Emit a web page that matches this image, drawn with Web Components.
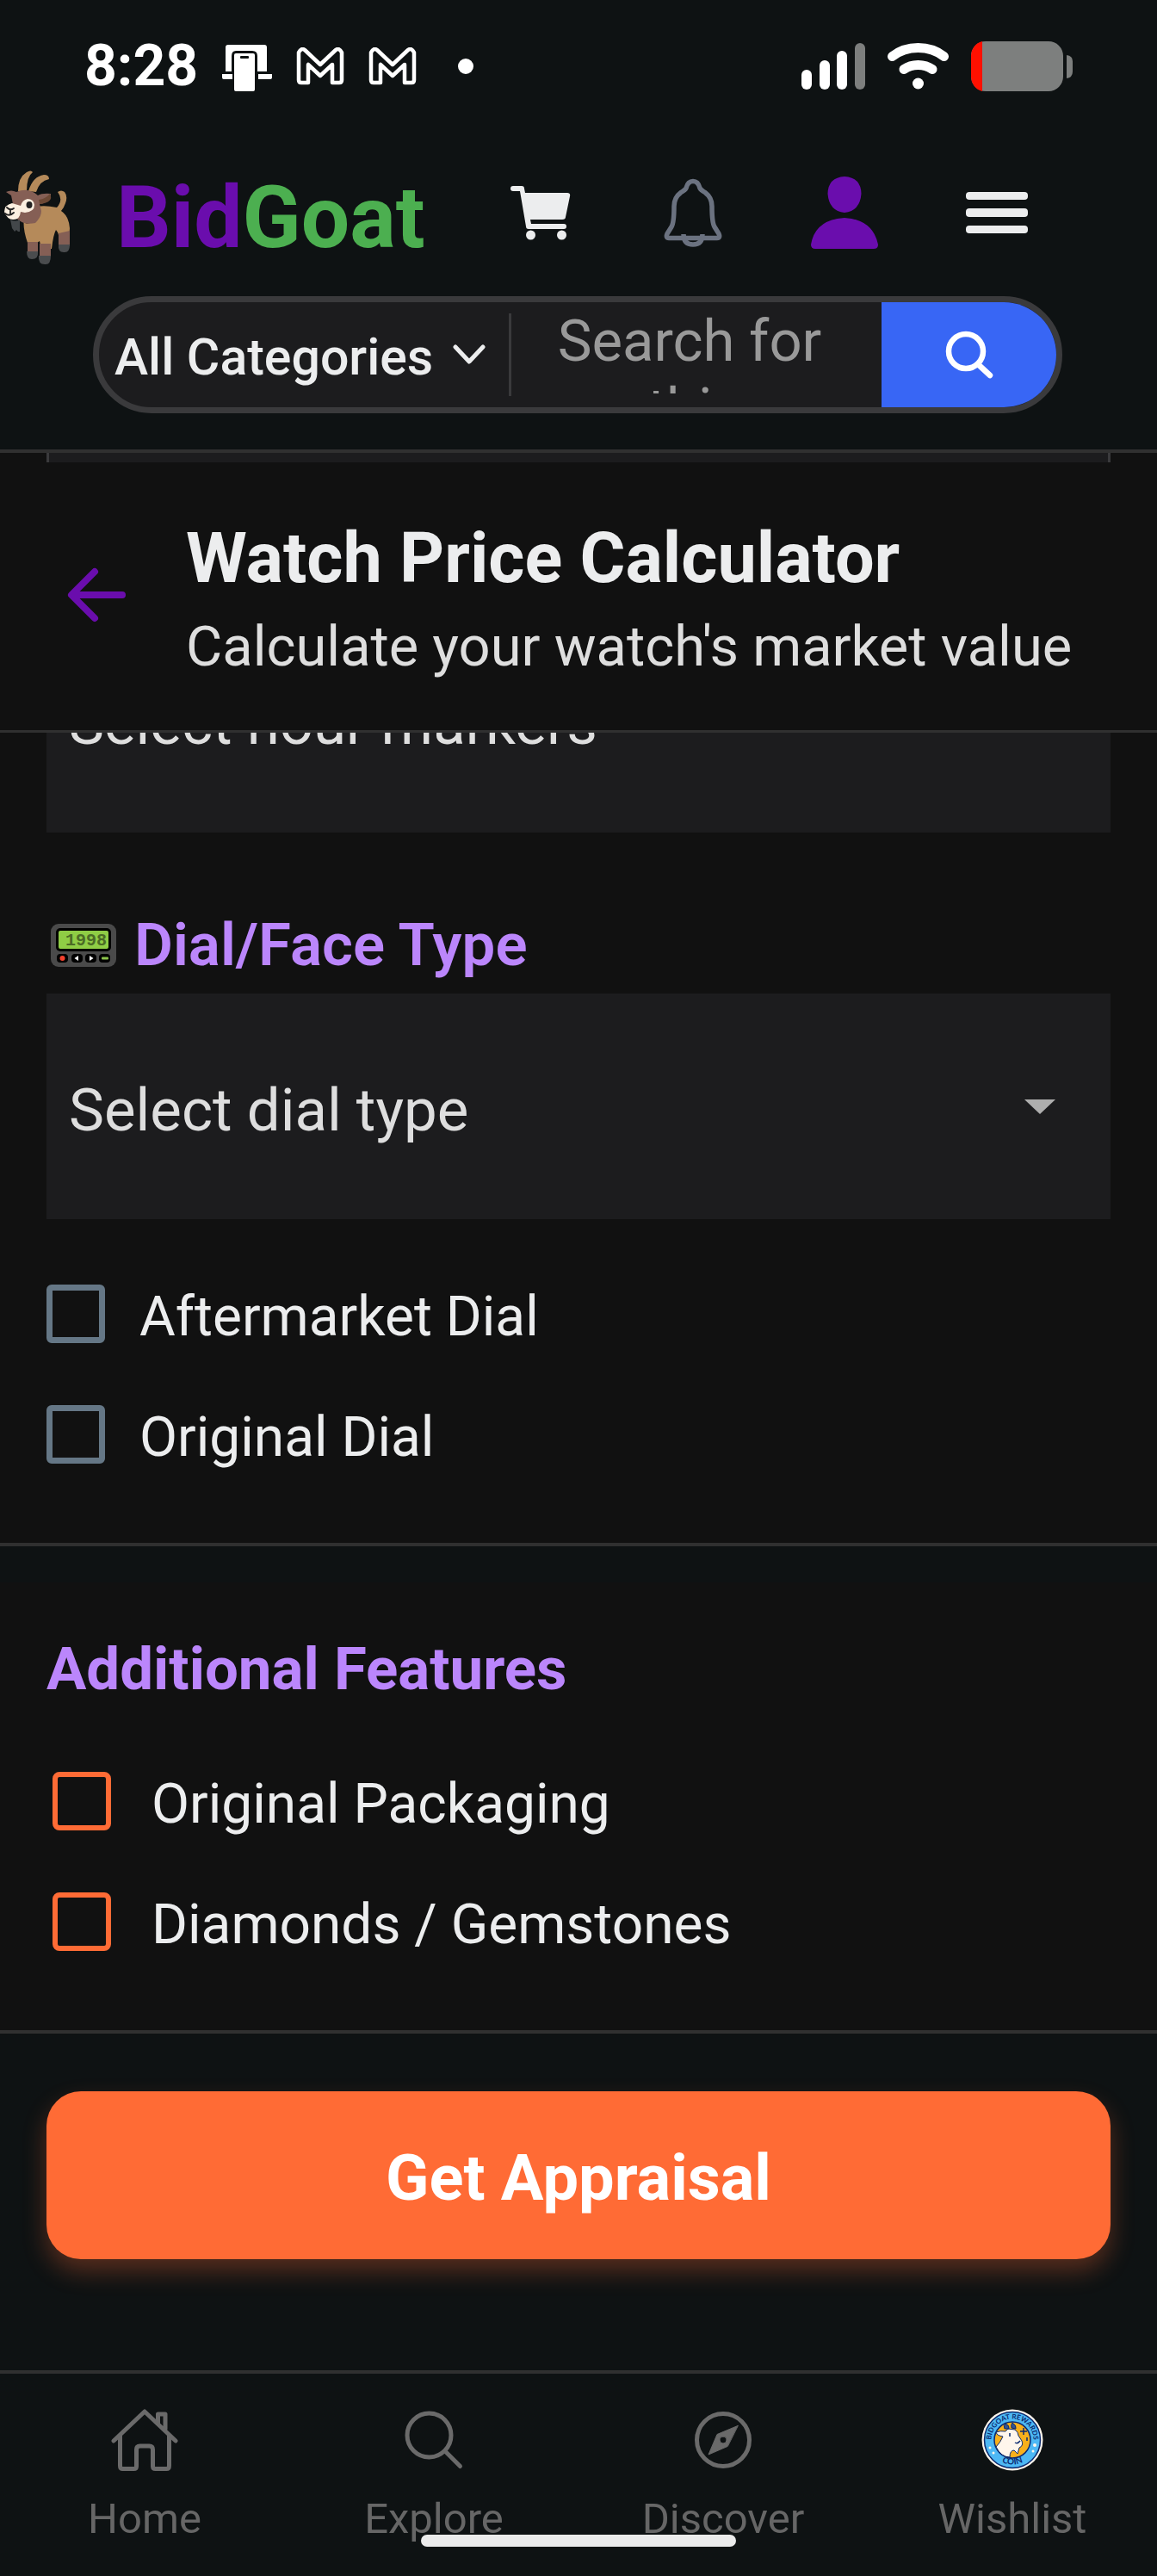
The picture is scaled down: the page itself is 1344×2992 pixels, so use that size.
<!DOCTYPE html>
<html lang="en">
<head>
<meta charset="utf-8">
<meta name="viewport" content="width=device-width, initial-scale=1">
<title>BidGoat – Watch Price Calculator</title>
<style>
  :root {
    --bg: #0e1213;
    --panel: #111111;
    --field: #1c1c1e;
    --line: #303030;
    --edge: #3a3a3c;
    --text: #ecedee;
    --soft: #dedede;
    --muted: #666666;
    --violet: #bb86fc;
    --purple: #6a0dad;
    --green: #4caf50;
    --blue: #3866f5;
    --orange: #ff6b35;
    --gutter: 54px;
  }
  body {
    margin: 0;
    background: var(--bg);
    color: var(--text);
    font-family: Roboto, "Noto Sans", sans-serif;
  }
</style>
</head>
<body>
<bid-app>
  <status-bar></status-bar>
  <site-header></site-header>
  <page-title heading="Watch Price Calculator">Calculate your watch's market value</page-title>
  <form-section>
    <select-field clipped name="markers" placeholder="Select hour markers"></select-field>
    <section-label spaced><pager-icon slot="icon"></pager-icon>Dial/Face Type</section-label>
    <select-field name="dial" placeholder="Select dial type"></select-field>
    <check-list>
      <check-item name="aftermarket">Aftermarket Dial</check-item>
      <check-item name="original">Original Dial</check-item>
    </check-list>
  </form-section>
  <form-section separated>
    <section-label strong>Additional Features</section-label>
    <check-list>
      <check-item accent name="packaging">Original Packaging</check-item>
      <check-item accent name="gems">Diamonds / Gemstones</check-item>
    </check-list>
  </form-section>
  <submit-bar>Get Appraisal</submit-bar>
  <bottom-nav></bottom-nav>
</bid-app>

<script>
const define = (name, html, setup) => customElements.define(name, class extends HTMLElement {
  constructor() {
    super();
    const t = document.createElement('template');
    t.innerHTML = '<style>*{box-sizing:border-box}svg{display:block;flex:none}button,select,textarea,input{font-family:inherit;color:inherit;margin:0;padding:0;border:0;background:none}</style>' + html;
    this.attachShadow({ mode: 'open' }).append(t.content);
  }
  connectedCallback() { if (setup) setup(this, this.shadowRoot); }
});

define('bid-app', `
  <style>
    :host { display: flex; flex-direction: column; position: relative; min-height: 100vh; background: var(--bg); }
  </style>
  <slot></slot>`);

define('status-bar', `
  <style>
    :host { display: flex; align-items: center; justify-content: space-between; height: 154px; padding: 0 98px; box-sizing: border-box; color: #fff; }
    .group { display: flex; align-items: center; }
    .left { gap: 28px; }
    .right { gap: 26px; }
    time { font-size: 66px; font-weight: 700; line-height: 76px; }
    .dot { width: 18px; height: 18px; border-radius: 9px; background: #fff; margin-left: 20px; }
  </style>
  <div class="group left">
    <time>8:28</time>
    <svg width="58" height="60" viewBox="0 0 58 60">
      <path d="M4 36V8q0-3 3-3h42q3 0 3 3v28H41V18q0-6-6-6H16q-5 0-5 6v18z" fill="#fff"/>
      <path d="M0 39h12v6H2q-2 0-2-2zM42 39h16v4q0 2-2 2H42z" fill="#fff"/>
      <rect x="14" y="15" width="24" height="44" rx="2" fill="#fff"/>
      <rect x="21" y="18" width="10" height="3" rx="1" fill="#0e1213"/>
    </svg>
    <svg width="56" height="44" viewBox="-1 0 56 44">
      <path d="M2 6Q5 0 9 3L27 20 45 3q4-3 7 3v32q0 3-3 3H41V20L27 33 13 20v21H5q-3 0-3-3z" fill="none" stroke="#fff" stroke-width="4.500" stroke-linejoin="round"/>
    </svg>
    <svg width="56" height="44" viewBox="-1 0 56 44">
      <path d="M2 6Q5 0 9 3L27 20 45 3q4-3 7 3v32q0 3-3 3H41V20L27 33 13 20v21H5q-3 0-3-3z" fill="none" stroke="#fff" stroke-width="4.500" stroke-linejoin="round"/>
    </svg>
    <span class="dot"></span>
  </div>
  <div class="group right">
    <svg width="74" height="54" viewBox="0 0 74 54" fill="#fff">
      <rect x="0" y="31" width="12" height="23" rx="6"/><rect x="21" y="20" width="12" height="34" rx="6"/>
      <rect x="41" y="9" width="12" height="45" rx="6"/><rect x="62" y="0" width="12" height="54" rx="6" fill="#7d7f7e"/>
    </svg>
    <svg width="71" height="54" viewBox="0 0 71 54" fill="none" stroke="#fff" stroke-linecap="round">
      <path d="M5.500 15.500Q18 5.500 35.500 5.500T65.500 15.500" stroke-width="11"/>
      <path d="M19 30.500q7-5 16.500-5t16.500 5" stroke-width="11"/>
      <circle cx="35.500" cy="47" r="6.500" fill="#fff" stroke="none"/>
    </svg>
    <svg width="118" height="58" viewBox="0 0 118 58">
      <rect width="107" height="58" rx="17" fill="#7d7f7e"/>
      <path d="M13 0v58A17 17 0 0 1 0 41V17A17 17 0 0 1 13 0z" fill="#ff1000"/>
      <path d="M111 16q7 1 7 7v12q0 7-7 8z" fill="#7d7f7e"/>
    </svg>
  </div>`);

define('goat-icon', `
  <style>:host { display: block; }</style>
  <svg width="78" height="110" viewBox="0 0 78 110" aria-label="goat">
    <path d="M61 43Q69 34 62 25q4-3 8 0 4 5 1 13-2 6-5 9 9 6 10 20l-1 18H64q0-12-4-16-3 5-5 22H43L41 82 38 84H27Q21 67 23 55L32 44q10-5 29-1z" fill="#b58a5a"/>
    <path d="M16 24Q16 8 26 2q5-3 7 0-7 5-7 22zM28 24Q33 7 46 5q6 0 6 5Q41 12 37 25z" fill="#b58a5a"/>
    <path d="M20 44Q20 62 27 62q13-3 13-17z" fill="#6d4935"/>
    <path d="M9 34 8 29 2 25q6-3 12 0 14-6 25 4 5-3 15-2 0 10-13 12l2 8q0 7-7 14Q20 64 13 54z" fill="#855f55"/>
    <path d="M40 34q8-1 13-7 5 10-12 12z" fill="#6d4935"/>
    <path d="M9 38Q0 40 0 48q4 10 11 9 7 0 8-9l5 1q11-1 11-9-1-7-8-7-6 1-8 8z" fill="#fbefe0"/>
    <ellipse cx="29" cy="40" rx="3.500" ry="4" fill="#222"/>
    <path d="M3 43q4 4 8 1M7 46v4M1 50q5 4 10-1" fill="none" stroke="#222" stroke-width="1.800" stroke-linecap="round"/>
    <path d="M7 57q6 3 11 0v14h-2l-2-2-2 2-3-4z" fill="#43474a"/>
    <path d="M27 83h12v13H27zM41 85h13v15H41zM63 73l13-3v18H63z" fill="#855f55"/>
    <path d="M26 94h13q1 9-7 9-6 0-6-9zM40 99h14q0 11-7 10-8 0-7-10zM63 86h13q0 10-7 9-7 0-6-9z" fill="#4a4c4e"/>
  </svg>`);

define('site-header', `
  <style>
    :host { display: block; border-bottom: 4px solid var(--line); padding-bottom: 42px; }
    .top { display: flex; align-items: center; height: 186px; padding-right: 98px; margin-bottom: 4px; }
    .brand { display: flex; align-items: center; gap: 52px; flex: 0 0 535px; padding: 12px 0 0 5px; box-sizing: content-box; text-decoration: none; font-size: 100px; font-weight: 700; line-height: 116px; color: var(--green); }
    .brand b { color: var(--purple); font-weight: inherit; }
    nav { display: flex; flex: 1; }
    nav button { flex: 1; height: 120px; display: flex; justify-content: center; align-items: center; }
    form { display: flex; margin: 0 110px 0 108px; height: 136px; border: 7px solid var(--edge); border-radius: 68px; background: var(--field); overflow: hidden; align-items: center; }
    .cat { display: grid; align-items: center; flex: 0 0 476px; height: 122px; }
    .cat > * { grid-area: 1 / 1; }
    .cat select { appearance: none; width: 100%; height: 122px; padding: 4px 0 0 18px; font-size: 59px; font-weight: 500; outline: 0; }
    .cat svg { justify-self: end; margin-right: 27px; pointer-events: none; }
    .rule { flex: 0 0 3px; height: 96px; background: var(--edge); }
    textarea { flex: 1; min-width: 0; height: 100px; padding: 0 16px 0 0; resize: none; overflow: hidden; outline: 0; font-size: 67px; line-height: 79px; text-align: center; margin-bottom: 10px; }
    textarea::placeholder { color: #999; opacity: 1; }
    .go { flex: 0 0 203px; height: 122px; background: var(--blue); display: flex; align-items: center; justify-content: center; }
  </style>
  <div class="top">
    <a class="brand" href="#"><goat-icon></goat-icon><span><b>Bid</b>Goat</span></a>
    <nav>
      <button aria-label="Cart"><svg width="70" height="64" viewBox="0 0 70 64" fill="var(--text)">
        <path d="M3 1h10q3 0 3 3l1 5h49q4 0 3 4l-5 24q0 3-4 3H23l1 5h38q3 0 3 3t-3 3H21q-3 0-3-3L11 7H3Q0 7 0 4t3-3z"/>
        <circle cx="23.500" cy="58" r="5.500"/><circle cx="59.500" cy="58" r="5.500"/></svg></button>
      <button aria-label="Notifications"><svg width="68" height="80" viewBox="0 0 68 80" fill="none" stroke="#6b7280" stroke-width="5.500" stroke-linejoin="round">
        <path d="M34 3.500q6 0 8 8 1 2 6 5 8 6 8 16 0 19 3 24l5 8q2 5-2 5H6q-4 0-2-5l5-8q3-5 3-24 0-10 8-16 5-3 6-5 2-8 8-8z"/>
        <path d="M23 65q0 12 11 12t11-12"/></svg></button>
      <button aria-label="Account"><svg width="78" height="86" viewBox="0 0 78 86" fill="var(--purple)">
        <path d="M39 1q19 1 19.500 20Q57 41 39 43 21 41 19.500 21 20 2 39 1zM39 49q33 2 39 31 0 5-5 5H5q-5 0-5-5 5-29 39-31z"/></svg></button>
      <button aria-label="Menu"><svg width="72" height="50" viewBox="0 0 72 50" fill="var(--text)">
        <rect y="1" width="72" height="9" rx="4"/><rect y="20" width="72" height="10" rx="4"/><rect y="40" width="72" height="9" rx="4"/></svg></button>
    </nav>
  </div>
  <form>
    <div class="cat">
      <select aria-label="Category"><option>All Categories</option></select>
      <svg width="38" height="24" viewBox="0 0 38 24"><path d="M3 3l16 17L35 3" fill="none" stroke="var(--text)" stroke-width="5" stroke-linecap="round" stroke-linejoin="round"/></svg>
    </div>
    <span class="rule"></span>
    <textarea aria-label="Search" placeholder="Search for anything..."></textarea>
    <button class="go" type="button" aria-label="Search"><svg width="58" height="56" viewBox="0 0 58 56" fill="none" stroke="#fff" stroke-width="6.500" stroke-linecap="round"><circle cx="25" cy="24" r="20"/><path d="M39 39l14 13"/></svg></button>
  </form>`);

define('page-title', `
  <style>
    :host { display: block; background: var(--panel); border-bottom: 3px solid var(--line); }
    .peek { height: 11px; margin: 0 var(--gutter); background: var(--field); border: solid var(--edge); border-width: 0 3px; }
    .bar { display: flex; align-items: center; gap: 70px; height: 311px; padding: 0 76px 4px; }
    h1 { margin: 0 0 16px; font-size: 81px; line-height: 96px; font-weight: 700; }
    p { margin: 0; font-size: 65px; line-height: 76px; color: var(--soft); }
    .words { padding-top: 8px; white-space: nowrap; }
  </style>
  <div class="peek"></div>
  <div class="bar">
    <button aria-label="Back"><svg width="70" height="64" viewBox="0 0 70 64" fill="none" stroke="var(--purple)" stroke-width="8" stroke-linecap="round" stroke-linejoin="round"><path d="M34 5L7 32l27 27M8 32h58"/></svg></button>
    <div class="words"><h1></h1><p><slot></slot></p></div>
  </div>`, (el, root) => { root.querySelector('h1').textContent = el.getAttribute('heading'); });

define('form-section', `
  <style>
    :host { display: block; background: var(--panel); padding: 0 var(--gutter) 92px; border-bottom: 4px solid var(--line); }
    :host([separated]) { border-top: 42px solid var(--bg); padding-top: 61px; }
  </style>
  <slot></slot>`);

define('pager-icon', `
  <style>:host { display: block; }</style>
  <svg width="78" height="66" viewBox="0 0 78 66" aria-label="pager">
    <rect x="1" y="8" width="76" height="50" rx="9" fill="#4a4a4a"/>
    <rect x="7" y="13" width="64" height="27" rx="5" fill="#000"/>
    <rect x="10" y="16" width="58" height="21" rx="2" fill="#8fcd45"/>
    <text x="42" y="33" text-anchor="middle" font-family="Liberation Mono, monospace" font-size="20" font-weight="700" fill="#4b6b26">1998</text>
    <g fill="#000"><rect x="8" y="43" width="13" height="10" rx="4"/><rect x="25" y="43" width="13" height="10" rx="4"/><rect x="41" y="43" width="13" height="10" rx="4"/><rect x="57" y="43" width="13" height="10" rx="4"/></g>
    <circle cx="14.500" cy="48" r="3" fill="#f4402c"/>
    <path d="M33 45v6L28.500 48zM46 45v6l4.500-3z" fill="#fff"/><rect x="60" y="46.500" width="8" height="3" rx="1" fill="#8bc34a"/>
  </svg>`);

define('section-label', `
  <style>
    :host { display: flex; align-items: center; gap: 20px; margin-bottom: 16px; font-size: 69px; line-height: 80px; font-weight: 600; color: var(--violet); }
    :host([spaced]) { margin-top: 91px; }
    :host([strong]) { font-weight: 700; margin-bottom: 79px; }
    h2 { margin: 0; font: inherit; }
    ::slotted([slot=icon]) { margin-left: 4px; }
  </style>
  <slot name="icon"></slot><h2><slot></slot></h2>`);

define('select-field', `
  <style>
    :host { display: grid; align-items: center; background: var(--field); }
    :host([clipped]) { display: flex; align-items: flex-end; height: 116px; overflow: hidden; }
    :host([clipped]) svg { display: none; }
    select, svg { grid-area: 1 / 1; }
    select { flex: none; appearance: none; width: 100%; height: 262px; padding: 8px 26px 0; font-size: 69px; color: var(--soft); outline: 0; }
    svg { justify-self: end; margin-right: 64px; pointer-events: none; }
  </style>
  <select><option></option></select>
  <svg width="36" height="18" viewBox="0 0 36 18"><path d="M0 1h36L18 18z" fill="#aeaeae"/></svg>`,
  (el, root) => {
    root.querySelector('option').textContent = el.getAttribute('placeholder');
    root.querySelector('select').setAttribute('aria-label', el.getAttribute('placeholder'));
  });

define('check-list', `
  <style>
    :host { display: flex; flex-direction: column; gap: 72px; margin-top: 76px; }
  </style>
  <slot></slot>`);

define('check-item', `
  <style>
    :host { display: block; --mark: #657786; }
    label { display: flex; align-items: center; gap: 40px; height: 68px; font-size: 64px; line-height: 76px; color: var(--text); }
    input { appearance: none; flex: none; width: 68px; height: 68px; border: 7px solid var(--mark); border-radius: 6px; }
    span { padding-top: 8px; white-space: nowrap; }
    :host([accent]) { --mark: var(--orange); }
    :host([accent]) label { padding-left: 7px; gap: 47px; }
    :host([accent]) input { border-width: 6px; border-radius: 8px; }
  </style>
  <label><input type="checkbox"><span><slot></slot></span></label>`,
  (el, root) => { root.querySelector('input').name = el.getAttribute('name'); });

define('submit-bar', `
  <style>
    :host { display: block; padding: 67px var(--gutter) 129px; }
    button { display: block; width: 100%; height: 195px; padding-top: 6px; border-radius: 40px; background: var(--orange); color: #fff; font-size: 74px; font-weight: 700; box-shadow: 0 14px 28px rgba(255, 107, 53, .3); }
  </style>
  <button type="submit"><slot></slot></button>`);

define('coin-icon', `
  <style>:host { display: block; } svg { overflow: visible; }</style>
  <svg width="72" height="72" viewBox="0 0 72 72" aria-label="coin">
    <circle cx="36" cy="36" r="35.500" fill="#fff6ec"/>
    <circle cx="36" cy="36" r="32.500" fill="#4db8f5" stroke="#0b2a6f" stroke-width="1.500"/>
    <circle cx="36" cy="36" r="21" fill="#f8b01c" stroke="#0b2a6f" stroke-width="1.500"/>
    <path d="M17 44q5-5 8-12-7-1-8-5 5-2 11-1l3-3 8 1q4 3 4 7l4 6q2 6-3 8l-2 7-4-4q-5 0-5 8-10 0-16-12z" fill="#fff6ec" stroke="#0b2a6f" stroke-width="1"/>
    <path d="M27 23q-2-4 1-6 5 2 4 6zM35 22q-1-4 1-6 5 3 4 7z" fill="#35548f" stroke="#0b2a6f"/>
    <path d="M33 28v4M39 39q3 2 6-2M49 22v8M45 26h8M53 33v4" fill="none" stroke="#0b2a6f" stroke-width="1.500"/>
    <g fill="#fff6ec"><circle cx="10" cy="45" r="1.500"/><circle cx="14" cy="51" r="1.500"/><circle cx="62" cy="42" r="2"/><circle cx="60" cy="49" r="1.500"/></g>
    <path id="arc" d="M13 44.500A24.500 24.500 0 1 1 59 44.500" fill="none"/>
    <path id="low" d="M11.500 51A29 29 0 0 0 60.500 51" fill="none"/>
    <g font-family="Lato, sans-serif" font-weight="700" fill="#0b2a6f" text-anchor="middle">
      <text font-size="8"><textPath href="#arc" startOffset="50%">BIDGOAT REWARDS</textPath></text>
      <text font-size="10"><textPath href="#low" startOffset="50%">COIN</textPath></text>
    </g>
  </svg>`);

define('bottom-nav', `
  <style>
    :host { display: block; border-top: 4px solid var(--line); }
    nav { display: flex; padding: 41px 0 38px; }
    a { flex: 1; display: flex; flex-direction: column; align-items: center; gap: 28px; font-size: 49px; line-height: 56px; color: var(--muted); text-decoration: none; }
    .handle { position: absolute; left: 50%; bottom: 34px; width: 366px; height: 14px; margin-left: -183px; border-radius: 7px; background: #ebebeb; }
    svg { fill: none; stroke: #6a6a6a; stroke-width: 5; stroke-linecap: round; stroke-linejoin: round; }
  </style>
  <nav>
    <a href="#"><svg width="78" height="72" viewBox="0 0 78 72"><path d="M3 37L39 3l36 34M10.500 31v35q0 3.500 3 3.500h13q3 0 3-3V47q0-4 4-4h11q4 0 4 4v19.500q0 3 3 3h13q3 0 3-3.500V31M54.500 17V6h8.500v17"/></svg>Home</a>
    <a href="#"><svg width="72" height="72" viewBox="0 0 72 72"><circle cx="30.500" cy="30.500" r="25.500"/><path d="M49 49l17.500 17.500"/></svg>Explore</a>
    <a href="#"><svg width="72" height="72" viewBox="0 0 72 72"><circle cx="36" cy="36" r="30.500"/><path fill-rule="evenodd" d="M53 19.500L29 29.500 19 53l22-9.500zM36 32a4 4 0 1 1 0 8 4 4 0 0 1 0-8z" style="fill:#6a6a6a;stroke-width:1"/></svg>Discover</a>
    <a href="#"><coin-icon></coin-icon>Wishlist</a>
  </nav>
  <span class="handle"></span>`);
</script>
</body>
</html>
